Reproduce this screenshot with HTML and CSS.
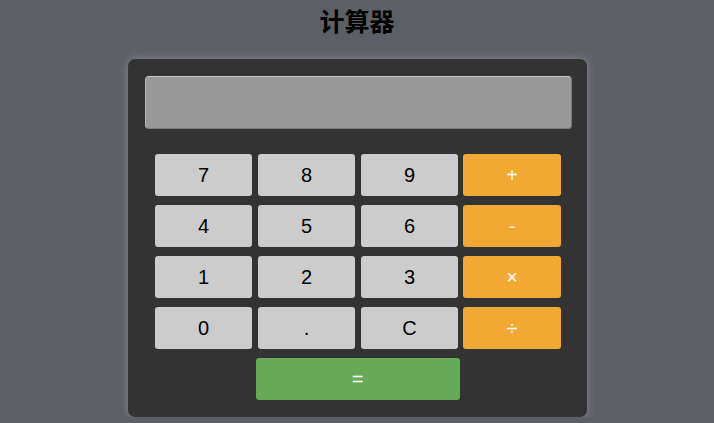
FILE: index.html
```html
<!DOCTYPE html>
<html lang="zh">
<head>
<meta charset="utf-8">
<title>计算器</title>
<link rel="stylesheet" href="styles.css">
</head>
<body>
<h1 class="title">计算器</h1>
<div class="calc">
  <div class="display"></div>
  <div class="keys">
    <button class="key">7</button>
    <button class="key">8</button>
    <button class="key">9</button>
    <button class="key op">+</button>
    <button class="key">4</button>
    <button class="key">5</button>
    <button class="key">6</button>
    <button class="key op">-</button>
    <button class="key">1</button>
    <button class="key">2</button>
    <button class="key">3</button>
    <button class="key op">×</button>
    <button class="key">0</button>
    <button class="key">.</button>
    <button class="key">C</button>
    <button class="key op">÷</button>
  </div>
  <div class="eq-row">
    <button class="key eq">=</button>
  </div>
</div>
</body>
</html>
```
FILE: styles.css
```css
html, body {
  margin: 0;
  padding: 0;
}
body {
  background: #5c5f66;
  font-family: "Liberation Sans", Arial, "Noto Sans CJK SC", sans-serif;
  display: flex;
  flex-direction: column;
  align-items: center;
}
.title {
  margin: 5px 0 0;
  height: 33px;
  line-height: 30px;
  font-size: 25px;
  font-weight: bold;
  color: #000;
  font-family: "Noto Sans CJK SC", sans-serif;
}
.calc {
  margin-top: 21px;
  margin-left: 1px;
  width: 459px;
  box-sizing: border-box;
  padding: 17px 15px 17px 17px;
  background: #333333;
  border-radius: 7px;
  box-shadow: 0 0 10px rgba(190, 190, 195, 0.45);
}
.display {
  height: 53px;
  box-sizing: border-box;
  background: #999999;
  border: 1px solid;
  border-color: #c4c4c4 #7a7a7a #7a7a7a #b5b5b5;
  border-radius: 4px;
}
.keys {
  margin-top: 25px;
  padding: 0 9px 0 10px;
  display: grid;
  grid-template-columns: 97px 97px 97px 98px;
  column-gap: 6px;
  row-gap: 9px;
}
.key {
  height: 42px;
  border: none;
  border-radius: 3px;
  background: #cccccc;
  color: #000;
  font-family: "Liberation Sans", Arial, sans-serif;
  font-size: 20px;
  padding: 0;
  margin: 0;
}
.key.op {
  background: #f2a933;
  color: #fff;
}
.keys .op {
  margin-left: -1px;
  margin-right: 1px;
}
.eq-row {
  margin-top: 9px;
  display: flex;
  justify-content: center;
  padding-right: 2px;
}
.key.eq {
  width: 204px;
  background: #66aa58;
  color: #fff;
}
```
